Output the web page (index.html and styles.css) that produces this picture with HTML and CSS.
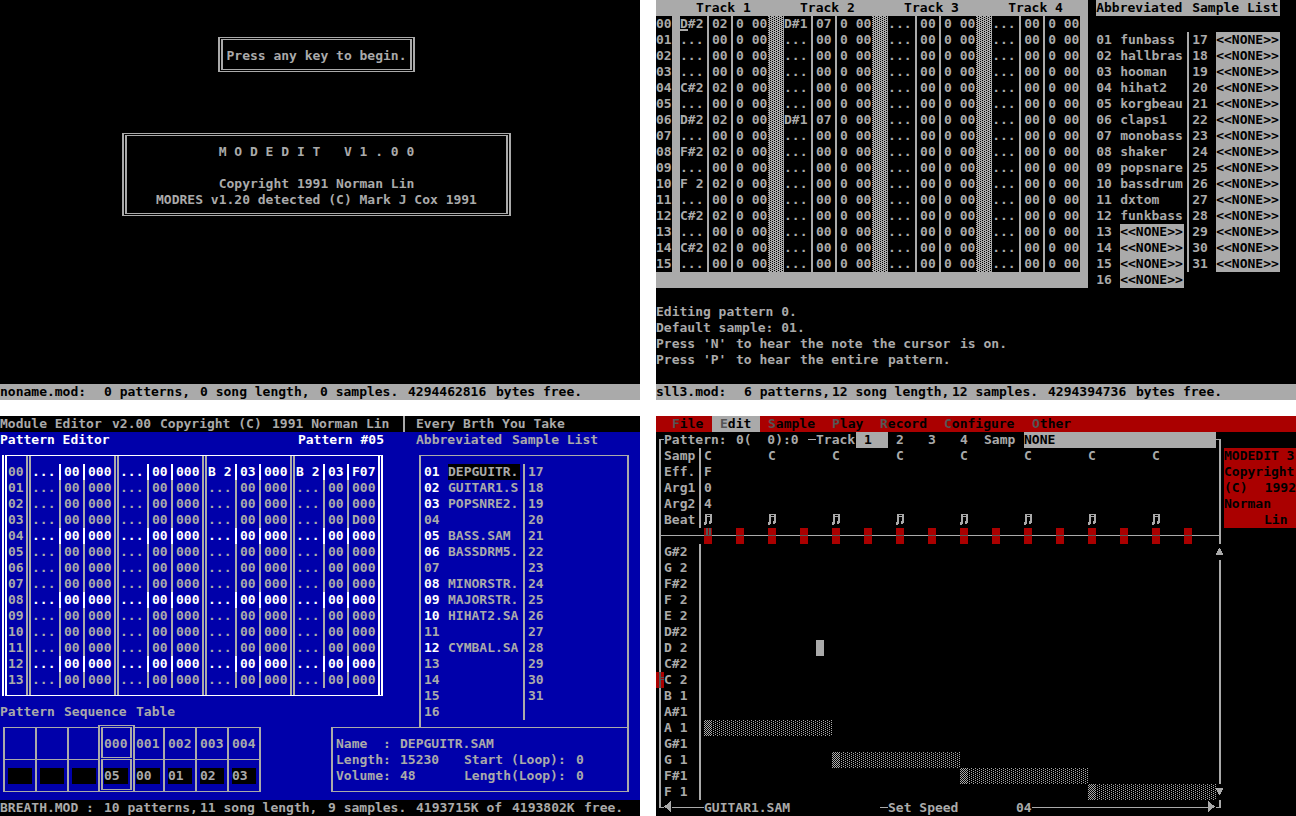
FILE: index.html
```html
<!DOCTYPE html>
<html lang="en">
<head>
<meta charset="utf-8">
<title>ModEdit</title>
<link rel="stylesheet" href="styles.css">
</head>
<body>
<svg class="defs" aria-hidden="true">
  <symbol id="beat" viewBox="0 0 8 16">
    <path d="M1 2h7v1H1zM1 3h2v1H1zM6 3h2v1H6zM1 4h7v1H1zM1 5h2v5H1zM6 5h2v4H6zM5 9h3v2H5zM0 10h3v2H0zM5 11h2v1H5zM0 12h2v1H0z"/>
  </symbol>
</svg>
<main class="wall">

  <section class="screen splash">
    <p class="box prompt">Press any key to begin.</p>
    <div class="box about">
      <h1>M O D E D I T   V 1 . 0 0</h1>
      <p>Copyright 1991 Norman Lin</p>
      <p>MODRES v1.20 detected (C) Mark J Cox 1991</p>
    </div>
    <footer class="status light"><span class="w13">noname.mod:</span><span class="w12">0 patterns,</span><span class="w15">0 song length,</span><span class="w11">0 samples.</span><span class="w11">4294462816</span><span>bytes free.</span></footer>
  </section>

  <section class="screen tracker">
    <div class="tracker-top">
      <table class="grid1">
        <colgroup><col class="c-row"></colgroup>
        <colgroup><col class="c-note"><col class="c-smp"><col class="c-fx"><col class="c-shade"></colgroup>
        <colgroup><col class="c-note"><col class="c-smp"><col class="c-fx"><col class="c-shade"></colgroup>
        <colgroup><col class="c-note"><col class="c-smp"><col class="c-fx"><col class="c-shade"></colgroup>
        <colgroup><col class="c-note"><col class="c-smp"><col class="c-fx"><col class="c-edge"></colgroup>
        <thead><tr><th></th><th colspan="4">Track 1</th><th colspan="4">Track 2</th><th colspan="4">Track 3</th><th colspan="4">Track 4</th></tr></thead>
        <tbody id="pattern-a"></tbody>
      </table>
      <div class="samples1">
        <h2 class="line"><span class="w12">Abbreviated </span><span>Sample List</span></h2>
        <div class="columns" id="samples-a"></div>
      </div>
    </div>
    <div class="help">
      <p>Editing pattern 0.</p>
      <p>Default sample: 01.</p>
      <p class="line"><span class="w10">Press 'N' </span><span class="w8">to hear </span><span class="w9">the note </span><span class="w11">the cursor </span><span>is on.</span></p>
      <p class="line"><span class="w10">Press 'P' </span><span class="w8">to hear </span><span class="w11">the entire </span><span>pattern.</span></p>
    </div>
    <footer class="status light"><span class="w11">sll3.mod:</span><span class="w11">6 patterns,</span><span class="w15">12 song length,</span><span class="w12">12 samples.</span><span class="w11">4294394736</span><span>bytes free.</span></footer>
  </section>

  <section class="screen module">
    <header class="title"><span class="w14">Module Editor</span><span class="w6">v2.00</span><span class="w14">Copyright (C)</span><span class="owner">1991 Norman Lin</span><span class="song">Every Brth You Take</span></header>
    <div class="desk">
      <div class="editor">
        <div class="heading"><h2>Pattern Editor</h2><span>Pattern #05</span></div>
        <table class="grid2"><tbody id="pattern-b"></tbody></table>
      </div>
      <div class="samples2">
        <h2 class="line"><span class="w12">Abbreviated </span><span>Sample List</span></h2>
        <div class="columns" id="samples-b"></div>
      </div>
      <div class="sequence">
        <h2 class="line"><span class="w8">Pattern </span><span class="w9">Sequence </span><span>Table</span></h2>
        <ol>
          <li><span></span><b></b></li>
          <li><span></span><b></b></li>
          <li><span></span><b></b></li>
          <li class="current"><span>000</span><b>05</b></li>
          <li><span>001</span><b>00</b></li>
          <li><span>002</span><b>01</b></li>
          <li><span>003</span><b>02</b></li>
          <li><span>004</span><b>03</b></li>
        </ol>
      </div>
      <dl class="info">
        <div><dt>Name  :</dt><dd>DEPGUITR.SAM</dd></div>
        <div><dt>Length:</dt><dd>15230</dd><dt class="loop">Start (Loop):</dt><dd>0</dd></div>
        <div><dt>Volume:</dt><dd>48</dd><dt class="loop">Length(Loop):</dt><dd>0</dd></div>
      </dl>
    </div>
    <footer class="status dark"><span class="w13">BREATH.MOD :</span><span class="w12">10 patterns,</span><span class="w16">11 song length,</span><span class="w11">9 samples.</span><span class="w12">4193715K of</span><span class="w9">4193802K</span><span>free.</span></footer>
  </section>

  <section class="screen piano">
    <nav class="menu">
      <button type="button" class="w6">File</button>
      <button type="button" class="w6 on">Edit</button>
      <button type="button" class="w8">Sample</button>
      <button type="button" class="w6">Play</button>
      <button type="button" class="w8">Record</button>
      <button type="button" class="w11">Configure</button>
      <button type="button" class="w8">Other</button>
    </nav>
    <div class="workspace">
      <div class="roll">
        <div class="roll-head">
          <span class="w9">Pattern: </span>
          <span class="w9">0(  0):0</span>
          <span class="track-label">Track</span>
          <button type="button" class="track on">1</button>
          <button type="button" class="track">2</button>
          <button type="button" class="track">3</button>
          <button type="button" class="track">4</button>
          <label for="samp">Samp</label>
          <input id="samp" type="text" value="NONE">
        </div>
        <table class="cues"><tbody id="cues"></tbody></table>
        <div class="ruler" id="ruler"></div>
        <div id="keys"></div>
        <div class="roll-foot">
          <button type="button" class="arrow" aria-label="Scroll left"><svg viewBox="0 0 8 16"><path d="M7 1v11H6v-1H5v-1H4V9H3V8H1V7H0V6h1V5h2V4h1V3h1V2h1V1z"/></svg></button>
          <span class="sample-name">GUITAR1.SAM</span>
          <span class="effect">Set Speed</span>
          <span class="value">04</span>
          <button type="button" class="arrow last" aria-label="Scroll right"><svg viewBox="0 0 8 16"><path d="M0 1h1v1h1v1h1v1h1v1h2v1h1v1H6v1H4v1H3v1H2v1H1v1H0z"/></svg></button>
        </div>
      </div>
      <aside class="credit">
        <p>MODEDIT 3</p>
        <p>Copyright</p>
        <p class="spread"><span>(C)</span><span>1992</span></p>
        <p>Norman</p>
        <p class="surname">Lin</p>
      </aside>
    </div>
  </section>

</main>
<script src="app.js"></script>
</body>
</html>
```
FILE: app.js
```js
const pad = n => String(n).padStart(2, '0');
const put = (id, html) => { document.getElementById(id).innerHTML = html; };
const range = n => Array.from({ length: n }, (_, i) => i);

/* First editor: row -> track -> [note, sample] */
const first = {
  0: { 0: ['D#2', '02'], 1: ['D#1', '07'] }, 4: { 0: ['C#2', '02'] },
  6: { 0: ['D#2', '02'], 1: ['D#1', '07'] }, 8: { 0: ['F#2', '02'] },
  10: { 0: ['F 2', '02'] }, 12: { 0: ['C#2', '02'] }, 14: { 0: ['C#2', '02'] }
};
put('pattern-a', range(16).map(r => `<tr><th>${pad(r)}</th>` + range(4).map(t => {
  const [note, smp] = (first[r] || {})[t] || ['...', '00'];
  const caret = r === 0 && t === 0 ? ' caret' : '';
  return `<td class="note${caret}">${note}</td><td class="smp">${smp}</td><td class="fx">0 00</td><td class="shade"></td>`;
}).join('') + '</tr>').join(''));

const listA = ['funbass', 'hallbras', 'hooman', 'hihat2', 'korgbeau', 'claps1', 'monobass',
  'shaker', 'popsnare', 'bassdrum', 'dxtom', 'funkbass'];
const itemA = i => `<li><span>${pad(i + 1)}</span>` +
  (listA[i] ? `<b>${listA[i]}</b>` : '<b class="none">&lt;&lt;NONE&gt;&gt;</b>') + '</li>';
put('samples-a', `<ol>${range(16).map(itemA).join('')}</ol><ol>${range(15).map(i => itemA(i + 16)).join('')}</ol>`);

/* Second editor: row -> track -> [note, sample, effect] */
const second = {
  0: { 2: ['B 2', '03', '000'], 3: ['B 2', '03', 'F07'] },
  3: { 3: ['...', '00', 'D00'] }
};
const spacer = '<tr class="spacer"><th></th>' +
  '<td class="note"></td><td class="smp"></td><td class="fx"></td>'.repeat(4) + '</tr>';
put('pattern-b', spacer + range(14).map(r => `<tr class="${r % 4 ? '' : 'bright'}"><th>${pad(r)}</th>` +
  range(4).map(t => {
    const [note, smp, fx] = (second[r] || {})[t] || ['...', '00', '000'];
    return `<td class="note">${note}</td><td class="smp">${smp}</td><td class="fx">${fx}</td>`;
  }).join('') + '</tr>').join('') + spacer);

const listB = ['DEPGUITR.', 'GUITAR1.S', 'POPSNRE2.', '', 'BASS.SAM', 'BASSDRM5.', '',
  'MINORSTR.', 'MAJORSTR.', 'HIHAT2.SA', '', 'CYMBAL.SA'];
const itemB = i => `<li class="${listB[i] ? 'used' : ''}"><span>${pad(i + 1)}</span>` +
  `<b class="${i ? '' : 'picked'}">${listB[i] || ''}</b></li>`;
put('samples-b', `<ol>${range(16).map(itemB).join('')}</ol><ol>${range(15).map(i => itemB(i + 16)).join('')}</ol>`);

/* Piano roll */
const note = '<svg class="beat" viewBox="0 0 8 16"><use href="#beat"/></svg>';
const cues = [['Samp', 'C', 8], ['Eff.', 'F', 1], ['Arg1', '0', 1], ['Arg2', '4', 1], ['Beat', note, 8]];
put('cues', cues.map(([name, mark, n]) => `<tr><th>${name}</th>` +
  range(8).map(i => `<td>${i < n ? mark : ''}</td>`).join('') + '</tr>').join(''));
put('ruler', '<i></i>'.repeat(16));

const keys = ['G#2', 'G 2', 'F#2', 'F 2', 'E 2', 'D#2', 'D 2', 'C#2', 'C 2', 'B 1', 'A#1', 'A 1', 'G#1', 'G 1', 'F#1', 'F 1'];
const bars = { 'A 1': 0, 'G 1': 128, 'F#1': 256, 'F 1': 384 };
const scroll = (label, d) => `<button type="button" class="arrow" aria-label="${label}"><svg viewBox="0 0 8 16"><path d="${d}"/></svg></button>`;
const ends = {
  'G#2': scroll('Scroll up', 'M3 4h1v1h1v2h1v2h1v2H0V9h1V7h1V5h1z'),
  'F 1': scroll('Scroll down', 'M0 4h7v2H6v2H5v2H4v1H3v-1H2V8H1V6H0z')
};
put('keys', keys.map(k => `<div class="key"><span class="gutter${k === 'C 2' ? ' mark' : ''}"></span>` +
  `<span class="name">${k}</span><span class="lane">` +
  (k in bars ? `<i class="bar" style="margin-left:${bars[k]}px"></i>` : '') +
  (k === 'D 2' ? '<i class="block"></i>' : '') +
  `</span>${ends[k] || ''}</div>`).join(''));
```
FILE: styles.css
```css
:root {
  --grey: #aaaaaa;
  --dim: #555555;
  --blue: #0000aa;
  --red: #aa0000;
}

* { box-sizing: border-box; margin: 0; padding: 0; }

body {
  background: #fff;
  color: var(--grey);
  font: bold 13px/16px "DejaVu Sans Mono", "Liberation Mono", monospace;
}

h1, h2, th, b, button, input { font: inherit; }
i { font-style: normal; }
ol { list-style: none; }
button, input { border: 0; border-radius: 0; background: none; color: inherit; }
table { border-spacing: 0; table-layout: fixed; }
th, td { height: 16px; text-align: left; }
svg { display: block; fill: currentColor; shape-rendering: crispEdges; }
h1, p, b, th, td, dt, dd, span { white-space: pre; }
.defs { display: none; }

/* Text-mode field widths, in 8px character cells */
.w6 { width: 48px; }
.w8 { width: 64px; }
.w9 { width: 72px; }
.w10 { width: 80px; }
.w11 { width: 88px; }
.w12 { width: 96px; }
.w13 { width: 104px; }
.w14 { width: 112px; }
.w15 { width: 120px; }
.w16 { width: 128px; }

.wall {
  display: grid;
  grid-template-columns: minmax(0, 1fr) minmax(0, 1fr);
  gap: 16px;
}

.screen {
  display: flex;
  flex-direction: column;
  min-height: calc((100vh - 16px) / 2);
  background: #000;
  overflow: hidden;
}

.line, .status { display: flex; }
.line > *, .status > * { flex: none; }
.status { margin-top: auto; height: 16px; }
.light { background: var(--grey); color: #000; }
.dark { background: #000; color: var(--grey); }

/* Splash */
.splash > * { flex: none; }
.box {
  align-self: center;
  margin-right: 7px;
  border: double var(--grey);
  border-width: 3px 5px;
  text-align: center;
}
.prompt { margin-top: 37px; padding: 8px 1px 5px; min-width: 197px; }
.about { margin-top: 61px; padding: 8px 24px 5px; min-width: 389px; }
.about h1 { margin-bottom: 16px; }

/* First editor */
.tracker-top { display: flex; align-items: flex-start; gap: 8px; }
.grid1 { width: 432px; flex: none; background: #000; border-bottom: 16px solid var(--grey); }
.grid1 thead th { background: var(--grey); color: #000; padding-left: 16px; }
.c-row { width: 24px; }
.c-note { width: 29px; }
.c-smp { width: 24px; }
.c-fx { width: 35px; }
.c-shade { width: 16px; }
.c-edge { width: 8px; }
.grid1 tbody th { border-right: 8px solid var(--grey); }
.grid1 .note { border-right: 2px solid var(--grey); }
.grid1 .smp { padding-left: 3px; border-right: 2px solid var(--grey); }
.grid1 .fx { padding-left: 3px; }
.grid1 .shade {
  background:
    conic-gradient(from 270deg at 1px 1px, #000 90deg, transparent 0) 2px 0 / 4px 2px,
    conic-gradient(from 270deg at 1px 1px, #000 90deg, transparent 0) 0 1px / 4px 2px,
    var(--grey);
}
.grid1 .shade:last-child { background: var(--grey); }
.caret { background: linear-gradient(var(--grey), var(--grey)) 0 13px / 8px 2px no-repeat; }

.columns { display: flex; }
.columns ol:first-child { padding-right: 3px; }
.columns ol + ol { align-self: flex-start; padding-left: 3px; border-left: 2px solid var(--grey); }
.columns li { display: flex; height: 16px; }
.columns li span { width: 24px; }

.samples1 h2 { background: var(--grey); color: #000; margin-bottom: 16px; width: 184px; }
.samples1 b { width: 64px; }
.samples1 .none { background: var(--grey); color: #000; }
.help { margin-top: 16px; }

/* Second editor */
.module { background: var(--blue); }
.title { display: flex; background: #000; }
.owner { width: 131px; }
.title .w14, .title .w6 { flex: none; }
.song { border-left: 2px solid var(--grey); padding-left: 11px; }
.desk {
  display: grid;
  grid-template-columns: 331px 85px minmax(213px, 1fr);
  grid-template-rows: 272px 23px auto;
  padding-right: 11px;
}
.editor { grid-area: 1 / 1 / 2 / 3; color: #fff; }
.heading { display: flex; justify-content: space-between; width: 384px; margin-bottom: 7px; }
.grid2 {
  width: 381px;
  margin-left: 2px;
  color: var(--grey);
  border-color: #fff;
  border-style: solid double;
  border-width: 1px 5px;
}
.grid2 th { width: 24px; padding-left: 1px; border-right: 5px double var(--grey); }
.grid2 .note { width: 30px; padding-left: 1px; border-right: 2px solid; }
.grid2 .smp { width: 24px; padding-left: 3px; border-right: 2px solid; }
.grid2 .fx { width: 34px; padding-left: 3px; border-right: 5px double var(--grey); }
.grid2 .fx:last-child { width: 29px; border-right: 0; }
.grid2 .bright td { color: #fff; }
.grid2 .spacer > * { height: 8px; }
.grid2 .spacer:last-child > * { height: 7px; }
.grid2 .spacer .note, .grid2 .spacer .smp { border-color: transparent; }

.samples2 { grid-area: 1 / 3 / 3 / 4; }
.samples2 h2 { margin-bottom: 7px; }
.samples2 .columns {
  margin-left: 3px;
  padding: 8px 3px 7px;
  border: solid var(--grey);
  border-width: 1px 2px 0;
}
.samples2 b { width: 72px; }
.samples2 .used span { color: #fff; }
.samples2 .picked { background: #000; }
.samples2 ol + ol { height: 256px; }
.samples2 ol + ol b { width: 24px; }

.sequence { grid-area: 2 / 1 / 4 / 2; }
.sequence h2 { margin-bottom: 7px; }
.sequence ol { display: flex; align-items: flex-start; margin-left: 3px; }
.sequence li { border: solid var(--grey); border-width: 1px 0 1px 2px; width: 32px; }
.sequence li:last-child { border-right-width: 2px; width: 34px; }
.sequence li > * { display: block; height: 31px; padding: 8px 3px 7px; }
.sequence b { height: 32px; border-top: 1px solid var(--grey); background: #000 content-box; }
.sequence .current {
  width: 37px;
  margin: -2px 0 0 -1px;
  padding: 1px;
  border-width: 1px 2px;
  background: var(--blue);
}
.sequence .current > * {
  height: 31px;
  padding: 8px 2px 5px 1px;
  border: solid var(--grey);
  border-width: 1px 2px;
}
.sequence .current b { margin-top: 1px; }
.sequence .current + li { width: 28px; border-left: 0; }
.sequence .current + li > * { padding-left: 1px; }

.info {
  grid-area: 3 / 2 / 4 / 4;
  align-self: start;
  padding: 8px 3px 7px;
  border: solid var(--grey);
  border-width: 1px 2px;
}
.info div { display: flex; }
.info dt, .info dd { width: 64px; flex: none; }
.info dd:last-child { width: auto; }
.info .loop { width: 112px; }

/* Piano roll */
.menu { display: flex; padding-left: 8px; background: var(--red); color: #000; }
.menu button { padding: 0 8px; text-align: left; }
.menu button::first-letter { color: var(--dim); }
.menu .on { background: var(--grey); }
.workspace { display: flex; justify-content: space-between; }
.roll { position: relative; isolation: isolate; flex: none; width: 568px; }
.roll::before {
  content: "";
  position: absolute;
  z-index: -1;
  inset: 7px 3px 8px 3px;
  border: solid var(--grey);
  border-width: 1px 2px;
}
.roll-head { display: flex; height: 16px; padding: 0 8px; }
.roll-head > * { background: #000; }
.track-label { width: 40px; margin-left: 8px; }
.track { width: 32px; padding-left: 8px; text-align: left; }
.roll-head .on { background: var(--grey); color: #000; }
.roll-head label { width: 40px; }
.roll-head input { flex: 1; min-width: 0; background: var(--grey); color: #000; }

.cues { width: 549px; margin-left: 8px; }
.cues th { width: 37px; border-right: 2px solid var(--grey); }
.cues td { width: 64px; padding-left: 3px; }
.beat { width: 8px; height: 16px; }

.ruler {
  display: flex;
  gap: 24px;
  height: 16px;
  margin: 0 3px;
  padding-left: 45px;
  background: linear-gradient(var(--grey), var(--grey)) 0 7px / 100% 1px no-repeat;
}
.ruler i { width: 8px; background: linear-gradient(var(--dim), var(--dim)) 0 7px / 100% 1px no-repeat var(--red); }
.ruler i:first-child {
  background:
    linear-gradient(var(--dim), var(--dim)) 0 7px / 100% 1px no-repeat,
    linear-gradient(var(--dim), var(--dim)) 2px 0 / 2px 8px no-repeat,
    linear-gradient(var(--dim), var(--dim)) 5px 0 / 2px 8px no-repeat,
    var(--red);
}

.key { display: flex; height: 16px; }
.gutter { width: 8px; }
.mark {
  background:
    linear-gradient(var(--dim), var(--dim)) 3px 0 / 2px 100% no-repeat,
    linear-gradient(var(--dim), var(--dim)) 5px 5px / 3px 1px no-repeat,
    linear-gradient(var(--dim), var(--dim)) 5px 7px / 3px 1px no-repeat,
    var(--red);
}
.name { width: 37px; border-right: 2px solid var(--grey); }
.lane { display: flex; width: 515px; padding-left: 3px; }
.block { width: 8px; margin-left: 112px; background: var(--grey); }
.bar {
  flex: none;
  width: 128px;
  background:
    conic-gradient(from 270deg at 1px 1px, var(--grey) 90deg, transparent 0) 3px 0 / 4px 2px,
    conic-gradient(from 270deg at 1px 1px, var(--grey) 90deg, transparent 0) 1px 1px / 4px 2px;
}
.bar::before {
  content: "";
  display: block;
  width: 8px;
  height: 16px;
  background:
    conic-gradient(from 270deg at 1px 1px, var(--grey) 90deg, transparent 0) 1px 0 / 2px 2px,
    conic-gradient(from 270deg at 1px 1px, var(--grey) 90deg, transparent 0) 0 1px / 2px 2px,
    #000;
}
.arrow { width: 8px; height: 16px; background: #000; }
.arrow svg { width: 8px; height: 16px; }

.roll-foot { display: flex; height: 16px; padding: 0 8px; }
.roll-foot > * { background: #000; }
.sample-name { width: 176px; margin-left: 32px; }
.effect { width: 128px; margin-left: 8px; }
.value { width: 16px; }
.last { margin-left: auto; }

.credit { align-self: flex-start; width: 72px; margin-top: 16px; background: var(--red); color: #000; }
.spread { display: flex; justify-content: space-between; }
.surname { padding-left: 40px; }
```
